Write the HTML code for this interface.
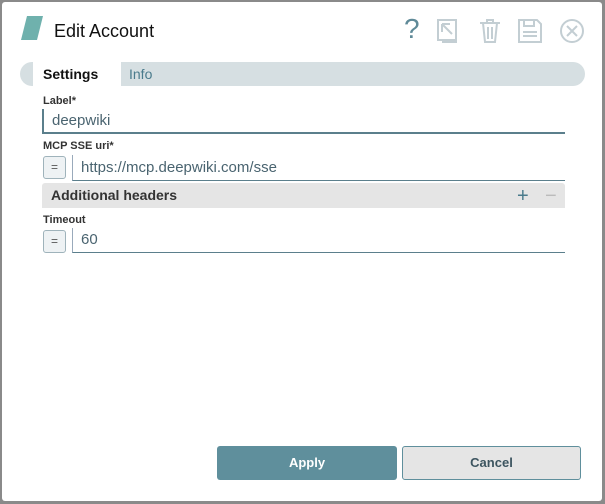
<!DOCTYPE html>
<html><head><style>
*{box-sizing:border-box;margin:0;padding:0}
body{width:605px;height:504px;background:#8a8a8a;font-family:"Liberation Sans",sans-serif;position:relative;overflow:hidden}
.dlg{position:absolute;left:2px;top:2px;width:600px;height:499px;background:#fff;border-radius:3px}
.abs{position:absolute}
.lbl{position:absolute;font-size:11px;font-weight:bold;color:#333}
.inp{position:absolute;border-bottom:1px solid #5b7f8c;border-left:1px solid #9ab;font-size:15px;color:#4a6470;padding-left:8px}
.eq{position:absolute;width:23px;height:23px;border:1px solid #9fb3bb;border-radius:3px;background:#eef2f4;font-size:12px;color:#555;text-align:center;line-height:21px}
</style></head><body>
<div class="dlg">
<svg class="abs" style="left:19px;top:14px" width="22" height="24"><polygon points="6,0 22,0 16,24 0,24" fill="#6fb1ad"/></svg>
<div class="abs" style="left:52px;top:19px;font-size:18px;color:#111;font-weight:500">Edit Account</div>
<div class="abs" style="left:402px;top:11px;font-size:28px;color:#5f8a98">?</div>
<svg class="abs" style="left:434px;top:16px" width="26" height="26" fill="none" stroke="#c3ced3" stroke-width="2"><rect x="2" y="2" width="18" height="20"/><path d="M6 6h8M6 6v8M6 6l10 10M20 6v18H6"/></svg>
<svg class="abs" style="left:476px;top:16px" width="26" height="26" fill="none" stroke="#c3ced3" stroke-width="2"><path d="M2 5h20M9 5V2h6v3M5 5l2 19h10l2-19M10 9v12M14 9v12"/></svg>
<svg class="abs" style="left:515px;top:16px" width="26" height="26" fill="none" stroke="#c3ced3" stroke-width="2"><path d="M2 2h18l4 4v18H2z"/><rect x="7" y="2" width="10" height="6"/><path d="M6 14h14M6 18h14"/></svg>
<svg class="abs" style="left:557px;top:16px" width="26" height="26" fill="none" stroke="#c3ced3" stroke-width="2"><circle cx="13" cy="13" r="11"/><path d="M8 8l10 10M18 8l-10 10"/></svg>
<div class="abs" style="left:18px;top:60px;width:565px;height:24px;background:#d6dfe2;border-radius:12px"></div>
<div class="abs" style="left:31px;top:60px;width:88px;height:26px;background:#fff"></div>
<div class="abs" style="left:41px;top:64px;font-size:14px;font-weight:bold;color:#111">Settings</div>
<div class="abs" style="left:127px;top:64px;font-size:14px;color:#4a7b8c">Info</div>
<div class="lbl" style="left:41px;top:93px">Label*</div>
<div class="inp" style="left:40px;top:107px;width:523px;height:25px;line-height:24px;border-bottom:2px solid #5b7f8c;border-left:2px solid #5b7f8c">deepwiki</div>
<div class="lbl" style="left:41px;top:138px">MCP SSE uri*</div>
<div class="eq" style="left:41px;top:154px">=</div>
<div class="inp" style="left:70px;top:153px;width:493px;height:26px;line-height:25px">https://mcp.deepwiki.com/sse</div>
<div class="abs" style="left:40px;top:181px;width:523px;height:25px;background:#e5e5e5;border-radius:3px 3px 0 0"></div>
<div class="abs" style="left:49px;top:185px;font-size:14px;font-weight:bold;color:#333">Additional headers</div>
<div class="abs" style="left:515px;top:183px;font-size:20px;color:#4a7b8c">+</div>
<div class="abs" style="left:543px;top:183px;font-size:20px;color:#bbb">−</div>
<div class="lbl" style="left:41px;top:212px">Timeout</div>
<div class="eq" style="left:41px;top:228px">=</div>
<div class="inp" style="left:70px;top:226px;width:493px;height:25px;line-height:24px">60</div>
<div class="abs" style="left:215px;top:444px;width:180px;height:34px;background:#5f8f9c;border-radius:3px;color:#fff;font-size:13px;font-weight:bold;text-align:center;line-height:34px">Apply</div>
<div class="abs" style="left:400px;top:444px;width:179px;height:34px;background:#e5e5e5;border:1px solid #5f8f9c;border-radius:3px;color:#3d5560;font-size:13px;font-weight:bold;text-align:center;line-height:32px">Cancel</div>
</div>
</body></html>
